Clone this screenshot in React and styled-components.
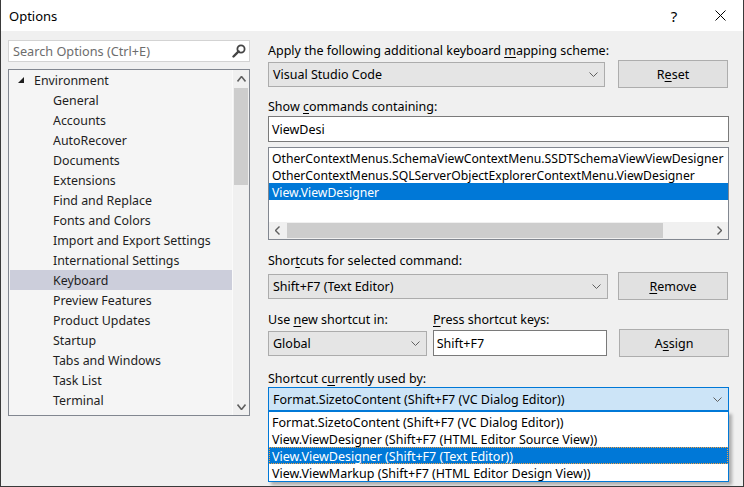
import React from "react";
import styled, { createGlobalStyle } from "styled-components";

const Global = createGlobalStyle`
  html, body { margin: 0; padding: 0; background: #f0f0f0; }
  body { font-family: "Noto Sans", "Open Sans", sans-serif; font-size: 12.5px; color: #000; }
  * { box-sizing: border-box; }
  u { text-underline-offset: 2px; }
`;

const Window = styled.div`
  width: 744px;
  height: 487px;
  display: flex;
  flex-direction: column;
  border: 1px solid #3a3a3a;
  border-top: none;
  background: #f0f0f0;
  overflow: hidden;
`;

const TitleBar = styled.div`
  height: 31px;
  background: #fff;
  display: flex;
  align-items: center;
  padding-left: 8px;
  font-size: 13px;
  color: #000;
`;

const Title = styled.div`
  flex: 1;
`;

const TitleButton = styled.div`
  width: 46px;
  height: 31px;
  display: flex;
  align-items: center;
  justify-content: center;
  font-size: ${(p) => p.$size || 14}px;
  color: #000;
`;

const Body = styled.div`
  flex: 1;
  display: flex;
  gap: 18px;
  padding: 9px 0 0 7px;
`;

const LeftCol = styled.div`
  width: 242px;
  display: flex;
  flex-direction: column;
  gap: 7px;
`;

const SearchBox = styled.div`
  height: 22px;
  background: #fff;
  border: 1px solid #d3d3d3;
  display: flex;
  align-items: center;
  padding: 0 3px 0 4px;
  color: #6d6d6d;
  font-size: 12.7px;
`;

const SearchText = styled.div`
  flex: 1;
`;

const Tree = styled.div`
  height: 347px;
  border: 1px solid #828790;
  background: #f5f5f5;
  display: flex;
  overflow: hidden;
`;

const TreeItems = styled.div`
  flex: 1;
  padding: 0 0 0 1px;
  overflow: hidden;
  font-size: 12.4px;
`;

const TreeRow = styled.div`
  height: 20px;
  display: flex;
  align-items: center;
  padding-left: ${(p) => p.$indent}px;
  background: ${(p) => (p.$selected ? "#cccedb" : "transparent")};
  color: #1e1e1e;
  white-space: nowrap;
`;

const Expander = styled.svg`
  width: 8px;
  height: 8px;
  margin-right: 9px;
  margin-left: 7px;
`;

const VScroll = styled.div`
  width: 17px;
  display: flex;
  flex-direction: column;
  background: #f0f0f0;
  border-left: 1px solid #fafafa;
`;

const ScrollArrow = styled.div`
  height: 17px;
  display: flex;
  align-items: center;
  justify-content: center;
`;

const VThumb = styled.div`
  margin: 1px 1px 0 1px;
  height: 97px;
  background: #cdcdcd;
`;

const Spacer = styled.div`
  flex: 1;
`;

const RightCol = styled.div`
  width: 461px;
  display: flex;
  flex-direction: column;
`;

const Label = styled.div`
  height: 16px;
  line-height: 20px;
  margin-top: ${(p) => p.$mt}px;
  white-space: nowrap;
`;

const Row = styled.div`
  display: flex;
  align-items: center;
  height: 28px;
  margin-top: ${(p) => p.$mt}px;
  gap: ${(p) => p.$gap || 10}px;
`;

const LabelRow = styled.div`
  display: flex;
  height: 16px;
  margin-top: ${(p) => p.$mt}px;
`;

const Combo = styled.div`
  width: ${(p) => p.$w}px;
  height: ${(p) => p.$h || 25}px;
  background: ${(p) => (p.$open ? "#cce4f7" : "#e5e5e5")};
  border: 1px solid ${(p) => (p.$open ? "#0078d7" : "#acacac")};
  display: flex;
  align-items: center;
  padding: 0 6px 0 4px;
  white-space: nowrap;
`;

const ComboText = styled.div`
  flex: 1;
`;

const Button = styled.div`
  width: 110px;
  height: 28px;
  background: #e1e1e1;
  border: 1px solid #adadad;
  display: flex;
  align-items: center;
  justify-content: center;
`;

const TextInput = styled.div`
  width: ${(p) => (p.$w ? `${p.$w}px` : "100%")};
  height: 26px;
  background: #fff;
  border: 1px solid #7a7a7a;
  display: flex;
  align-items: center;
  padding-left: 3px;
  margin-top: ${(p) => p.$mt || 0}px;
`;

const CmdList = styled.div`
  margin-top: 5px;
  height: 93px;
  background: #fff;
  border: 1px solid #828790;
  display: flex;
  flex-direction: column;
`;

const CmdItems = styled.div`
  flex: 1;
  padding-top: 1px;
  font-size: 12.2px;
`;

const CmdItem = styled.div`
  height: 17px;
  line-height: 20px;
  padding-left: 3px;
  white-space: nowrap;
  background: ${(p) => (p.$selected ? "#0078d7" : "transparent")};
  color: ${(p) => (p.$selected ? "#fff" : "#000")};
`;

const HScroll = styled.div`
  height: 17px;
  display: flex;
  background: #f0f0f0;
`;

const HArrow = styled.div`
  width: 17px;
  display: flex;
  align-items: center;
  justify-content: center;
`;

const HThumb = styled.div`
  width: 376px;
  margin: 1px 0 1px 1px;
  background: #cdcdcd;
`;

const DropWrap = styled.div`
  position: relative;
  margin-top: 2px;
`;

const DropList = styled.div`
  position: absolute;
  left: 0;
  top: 24px;
  width: 461px;
  height: 71px;
  background: #fff;
  border: 1px solid #0078d7;
  padding-top: 1px;
  box-shadow: 3px 3px 3px rgba(0, 0, 0, 0.28);
`;

const DropItem = styled.div`
  height: 17px;
  line-height: 17px;
  padding-left: 2px;
  white-space: nowrap;
  background: ${(p) => (p.$selected ? "#0078d7" : "transparent")};
  color: ${(p) => (p.$selected ? "#fff" : "#000")};
  border: 1px dotted ${(p) => (p.$selected ? "#f5a040" : "transparent")};
`;

const Chevron = ({ dir = "down", color = "#606060", w = 9, h = 5, sw = 1 }) => {
  const d =
    dir === "down"
      ? `M0.5 0.5 L${w / 2} ${h - 0.5} L${w - 0.5} 0.5`
      : dir === "up"
      ? `M0.5 ${h - 0.5} L${w / 2} 0.5 L${w - 0.5} ${h - 0.5}`
      : dir === "left"
      ? `M${w - 0.5} 0.5 L0.5 ${h / 2} L${w - 0.5} ${h - 0.5}`
      : `M0.5 0.5 L${w - 0.5} ${h / 2} L0.5 ${h - 0.5}`;
  return (
    <svg width={w} height={h} viewBox={`0 0 ${w} ${h}`}>
      <path d={d} fill="none" stroke={color} strokeWidth={sw} />
    </svg>
  );
};

const treeItems = [
  "General",
  "Accounts",
  "AutoRecover",
  "Documents",
  "Extensions",
  "Find and Replace",
  "Fonts and Colors",
  "Import and Export Settings",
  "International Settings",
  "Keyboard",
  "Preview Features",
  "Product Updates",
  "Startup",
  "Tabs and Windows",
  "Task List",
  "Terminal",
];

export default function App() {
  return (
    <>
      <Global />
      <Window>
        <TitleBar>
          <Title>Options</Title>
          <TitleButton $size={15}>?</TitleButton>
          <TitleButton>
            <svg width="11" height="11" viewBox="0 0 11 11">
              <path d="M0.5 0.5 L10.5 10.5 M10.5 0.5 L0.5 10.5" stroke="#000" strokeWidth="1" />
            </svg>
          </TitleButton>
        </TitleBar>
        <Body>
          <LeftCol>
            <SearchBox>
              <SearchText>Search Options (Ctrl+E)</SearchText>
              <svg width="14" height="14" viewBox="0 0 14 14">
                <circle cx="9" cy="5" r="3.6" fill="none" stroke="#444" strokeWidth="1.8" />
                <path d="M6.6 7.4 L1.5 12.5" stroke="#444" strokeWidth="2.4" strokeLinecap="round" />
              </svg>
            </SearchBox>
            <Tree>
              <TreeItems>
                <TreeRow $indent={0}>
                  <Expander viewBox="0 0 8 8">
                    <polygon points="7,1 7,7 1,7" fill="#1e1e1e" />
                  </Expander>
                  Environment
                </TreeRow>
                {treeItems.map((t) => (
                  <TreeRow key={t} $indent={43} $selected={t === "Keyboard"}>
                    {t}
                  </TreeRow>
                ))}
              </TreeItems>
              <VScroll>
                <ScrollArrow>
                  <Chevron dir="up" w={9} h={6} sw={1.6} />
                </ScrollArrow>
                <VThumb />
                <Spacer />
                <ScrollArrow>
                  <Chevron dir="down" w={9} h={6} sw={1.6} />
                </ScrollArrow>
              </VScroll>
            </Tree>
          </LeftCol>
          <RightCol>
            <Label $mt={1}>
              Apply the following additional keyboard <u>m</u>apping scheme:
            </Label>
            <Row $mt={3} $gap={13}>
              <Combo $w={337}>
                <ComboText>Visual Studio Code</ComboText>
                <Chevron />
              </Combo>
              <Button>
                <span>
                  R<u>e</u>set
                </span>
              </Button>
            </Row>
            <Label $mt={9}>
              Show <u>c</u>ommands containing:
            </Label>
            <TextInput $mt={3}>ViewDesi</TextInput>
            <CmdList>
              <CmdItems>
                <CmdItem>OtherContextMenus.SchemaViewContextMenu.SSDTSchemaViewViewDesigner</CmdItem>
                <CmdItem>OtherContextMenus.SQLServerObjectExplorerContextMenu.ViewDesigner</CmdItem>
                <CmdItem $selected>View.ViewDesigner</CmdItem>
              </CmdItems>
              <HScroll>
                <HArrow>
                  <Chevron dir="left" w={5} h={9} sw={1.4} />
                </HArrow>
                <HThumb />
                <Spacer />
                <HArrow>
                  <Chevron dir="right" w={5} h={9} sw={1.4} />
                </HArrow>
              </HScroll>
            </CmdList>
            <Label $mt={11}>
              Shor<u>t</u>cuts for selected command:
            </Label>
            <Row $mt={5}>
              <Combo $w={340}>
                <ComboText>Shift+F7 (Text Editor)</ComboText>
                <Chevron />
              </Combo>
              <Button>
                <span>
                  <u>R</u>emove
                </span>
              </Button>
            </Row>
            <LabelRow $mt={10}>
              <Label $mt={0} style={{ width: 165 }}>
                Use <u>n</u>ew shortcut in:
              </Label>
              <Label $mt={0}>
                <u>P</u>ress shortcut keys:
              </Label>
            </LabelRow>
            <Row $mt={3} $gap={6}>
              <Combo $w={159}>
                <ComboText>Global</ComboText>
                <Chevron />
              </Combo>
              <TextInput $w={175}>Shift+F7</TextInput>
              <Spacer />
              <Button>
                <span>
                  A<u>s</u>sign
                </span>
              </Button>
            </Row>
            <Label $mt={12}>
              Shortcut c<u>u</u>rrently used by:
            </Label>
            <DropWrap>
              <Combo $w={461} $h={24} $open>
                <ComboText>Format.SizetoContent (Shift+F7 (VC Dialog Editor))</ComboText>
                <Chevron />
              </Combo>
              <DropList>
                <DropItem>Format.SizetoContent (Shift+F7 (VC Dialog Editor))</DropItem>
                <DropItem>View.ViewDesigner (Shift+F7 (HTML Editor Source View))</DropItem>
                <DropItem $selected>View.ViewDesigner (Shift+F7 (Text Editor))</DropItem>
                <DropItem>View.ViewMarkup (Shift+F7 (HTML Editor Design View))</DropItem>
              </DropList>
            </DropWrap>
          </RightCol>
        </Body>
      </Window>
    </>
  );
}
